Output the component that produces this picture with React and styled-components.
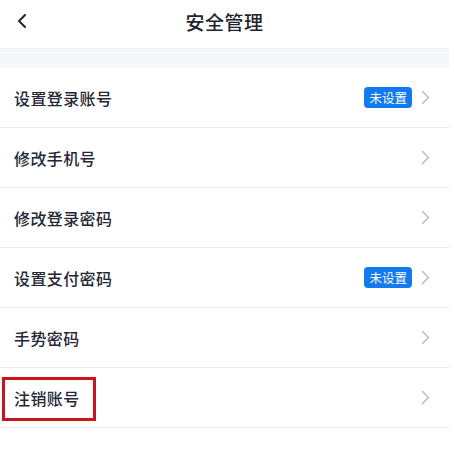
import React from "react";
import styled, { createGlobalStyle } from "styled-components";

const Global = createGlobalStyle`
  html, body { margin: 0; padding: 0; background: #fff; }
  body { font-family: "Noto Sans CJK SC", "Noto Sans", sans-serif; }
`;

const Page = styled.div`
  width: 449px;
  background: #fff;
`;

const Header = styled.div`
  height: 49px;
  display: flex;
  align-items: center;
  justify-content: center;
  position: relative;
  border-bottom: 1px solid #eef0f2;
  box-sizing: border-box;
`;

const Back = styled.div`
  position: absolute;
  left: 16px;
  top: 13px;
  width: 14px;
  height: 16px;
  display: flex;
`;

const Title = styled.div`
  font-size: 19px;
  font-weight: 500;
  color: #1f2430;
  margin-top: -6px;
  letter-spacing: 0.5px;
`;

const Band = styled.div`
  height: 19px;
  background: #f6f7f9;
`;

const List = styled.div`
  display: flex;
  flex-direction: column;
`;

const Row = styled.div`
  height: 60px;
  box-sizing: border-box;
  border-bottom: 1px solid #ececee;
  display: flex;
  align-items: center;
  padding: 0 19px 0 14px;
`;

const Label = styled.span`
  flex: 1;
  font-size: 16px;
  font-weight: 500;
  color: #232834;
  letter-spacing: 0.4px;
  ${(p) =>
    p.$boxed &&
    `
    position: relative;
    &::after {
      content: "";
      position: absolute;
      left: -12px;
      top: -9px;
      width: 94px;
      height: 44px;
      border: 3px solid #c9151e;
      box-sizing: border-box;
    }
  `}
`;

const Badge = styled.span`
  background: #1379ef;
  color: #fff;
  font-size: 12.5px;
  line-height: 21px;
  height: 21px;
  padding: 0 5px;
  border-radius: 4px;
  margin-right: 9px;
`;

const Chevron = () => (
  <svg width="9" height="15" viewBox="0 0 9 15" fill="none">
    <path d="M1.5 1.5 L7.5 7.5 L1.5 13.5" stroke="#b4b6ba" strokeWidth="1.4" strokeLinecap="round" strokeLinejoin="round" />
  </svg>
);

const items = [
  { label: "设置登录账号", badge: true },
  { label: "修改手机号" },
  { label: "修改登录密码" },
  { label: "设置支付密码", badge: true },
  { label: "手势密码" },
  { label: "注销账号", boxed: true },
];

export default function App() {
  return (
    <Page>
      <Global />
      <Header>
        <Back>
          <svg width="12" height="16" viewBox="0 0 12 16" fill="none">
            <path d="M9 2 L3 8 L9 14" stroke="#1f2430" strokeWidth="2" strokeLinecap="round" strokeLinejoin="round" />
          </svg>
        </Back>
        <Title>安全管理</Title>
      </Header>
      <Band />
      <List>
        {items.map((it) => (
          <Row key={it.label}>
            <Label $boxed={it.boxed}>{it.label}</Label>
            {it.badge && <Badge>未设置</Badge>}
            <Chevron />
          </Row>
        ))}
      </List>
    </Page>
  );
}
